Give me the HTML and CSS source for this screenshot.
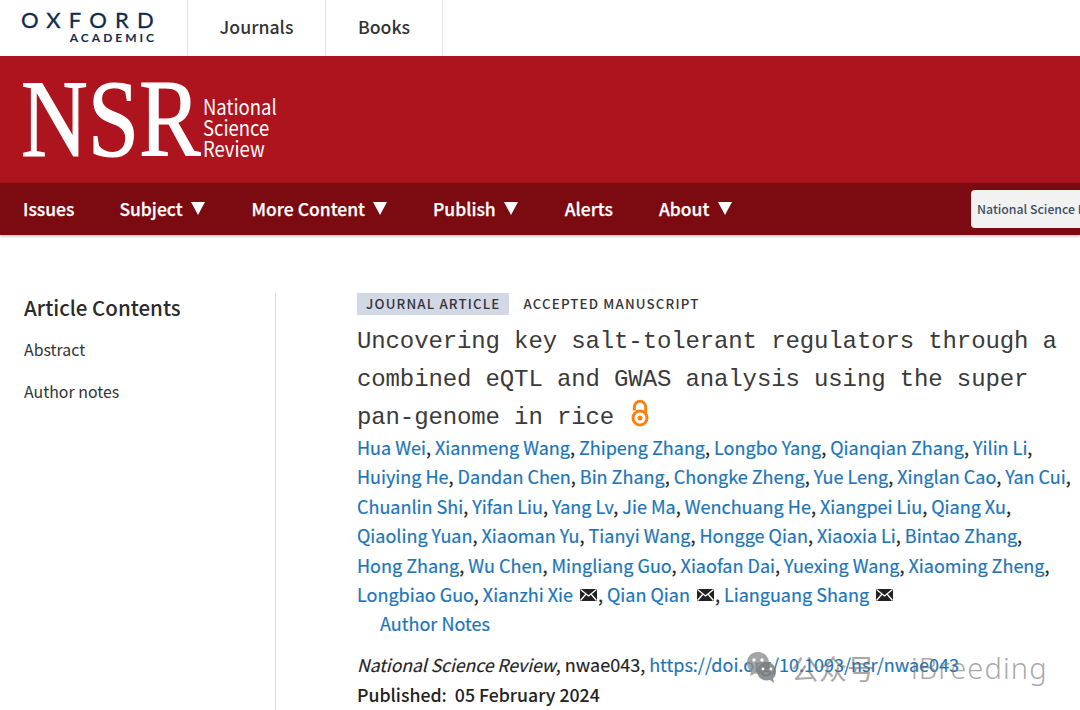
FILE: index.html
```html
<!DOCTYPE html>
<html lang="en">
<head>
<meta charset="utf-8">
<title>Uncovering key salt-tolerant regulators</title>
<link rel="stylesheet" href="styles.css">
</head>
<body>
<header class="topbar">
  <a class="oxford">
    <span class="oxford-main">OXFORD</span>
    <span class="oxford-sub">ACADEMIC</span>
  </a>
  <a class="top-link top-journals">Journals</a>
  <a class="top-link top-books">Books</a>
</header>
<section class="brand">
  <span class="nsr">NSR</span>
  <span class="nsr-name">National<br>Science<br>Review</span>
</section>
<nav class="nav">
  <a class="nav-item nav-issues">Issues</a>
  <a class="nav-item nav-subject">Subject <i class="tri"></i></a>
  <a class="nav-item nav-more">More Content <i class="tri"></i></a>
  <a class="nav-item nav-publish">Publish <i class="tri"></i></a>
  <a class="nav-item nav-alerts">Alerts</a>
  <a class="nav-item nav-about">About <i class="tri"></i></a>
  <div class="search">National Science Review</div>
</nav>
<main class="page">
  <aside class="sidebar">
    <h2 class="side-title">Article Contents</h2>
    <a class="side-link">Abstract</a>
    <a class="side-link">Author notes</a>
  </aside>
  <article class="article">
    <div class="labels">
      <span class="label-type">JOURNAL ARTICLE</span>
      <span class="label-plain">ACCEPTED MANUSCRIPT</span>
    </div>
    <h1 class="title">Uncovering key salt-tolerant regulators through a combined eQTL and GWAS analysis using the super pan-genome in rice
      <svg class="oa" viewBox="0 0 18 28" width="18" height="28"><path d="M3.300 11.500V8a5.700 5.700 0 0 1 11.400 0v6" fill="none" stroke="#f68212" stroke-width="3"/><circle cx="9" cy="19" r="7" fill="none" stroke="#f68212" stroke-width="3"/><circle cx="9" cy="19" r="2.500" fill="#f68212"/></svg></h1>
    <p class="authors">
      <a>Hua Wei</a>, <a>Xianmeng Wang</a>, <a>Zhipeng Zhang</a>, <a>Longbo Yang</a>, <a>Qianqian Zhang</a>, <a>Yilin Li</a>,<br>
      <a>Huiying He</a>, <a>Dandan Chen</a>, <a>Bin Zhang</a>, <a>Chongke Zheng</a>, <a>Yue Leng</a>, <a>Xinglan Cao</a>, <a>Yan Cui</a>,<br>
      <a>Chuanlin Shi</a>, <a>Yifan Liu</a>, <a>Yang Lv</a>, <a>Jie Ma</a>, <a>Wenchuang He</a>, <a>Xiangpei Liu</a>, <a>Qiang Xu</a>,<br>
      <a>Qiaoling Yuan</a>, <a>Xiaoman Yu</a>, <a>Tianyi Wang</a>, <a>Hongge Qian</a>, <a>Xiaoxia Li</a>, <a>Bintao Zhang</a>,<br>
      <a>Hong Zhang</a>, <a>Wu Chen</a>, <a>Mingliang Guo</a>, <a>Xiaofan Dai</a>, <a>Yuexing Wang</a>, <a>Xiaoming Zheng</a>,<br>
      <a>Longbiao Guo</a>, <a>Xianzhi Xie</a> <svg class="mail" viewBox="0 0 17 12" width="17" height="12"><path d="M0 0h17v12H0z" fill="#222"/><path d="M0.500 0.500l8 6.500 8-6.500M0.500 11.500l5.500-6.500M16.500 11.500L11 5" fill="none" stroke="#fff" stroke-width="1.300"/></svg>, <a>Qian Qian</a> <svg class="mail" viewBox="0 0 17 12" width="17" height="12"><path d="M0 0h17v12H0z" fill="#222"/><path d="M0.500 0.500l8 6.500 8-6.500M0.500 11.500l5.500-6.500M16.500 11.500L11 5" fill="none" stroke="#fff" stroke-width="1.300"/></svg>, <a>Lianguang Shang</a> <svg class="mail" viewBox="0 0 17 12" width="17" height="12"><path d="M0 0h17v12H0z" fill="#222"/><path d="M0.500 0.500l8 6.500 8-6.500M0.500 11.500l5.500-6.500M16.500 11.500L11 5" fill="none" stroke="#fff" stroke-width="1.300"/></svg>
    </p>
    <a class="author-notes">Author Notes</a>
    <p class="citation"><em class="journal">National Science Review</em>, nwae043, <a>https://doi.org/10.1093/nsr/nwae043</a></p>
    <p class="published"><span class="pub-label">Published:</span> 05 February 2024</p>
  </article>
</main>
<div class="watermark">
  <svg class="wm-icon" viewBox="0 0 32 34" width="32" height="34"><path d="M12 1C5.500 1 1 5.500 1 12c0 3.500 1.500 6.500 4 8.500L4 25l5-2.500c1 .3 2 .4 3 .4C18.500 23 23 18 23 12S18.500 1 12 1z" fill="#8e8e8e" fill-opacity=".8"/><path d="M21 11c-6 0-10 4-10 9s4 9.500 10 9.500c1 0 2-.1 3-.4l4 3-1-4.500c2-1.700 3-4.500 3-7.100 0-5-4-9.500-9-9.500z" fill="#7e7e7e" fill-opacity=".85"/><circle cx="8" cy="9" r="1.700" fill="#fff"/><circle cx="16" cy="9" r="1.700" fill="#fff"/><circle cx="17" cy="18" r="1.400" fill="#fff"/><circle cx="25" cy="18" r="1.400" fill="#fff"/></svg>
  <span class="wm-cjk">公众号</span>
  <span class="wm-latin">iBreeding</span>
</div>
</body>
</html>
```
FILE: styles.css
```css
* { box-sizing: border-box; }
html, body { margin: 0; padding: 0; }
body {
  width: 1080px; height: 710px; overflow: hidden; position: relative; background: #fff;
  font-family: "Noto Sans CJK SC", "Noto Sans", sans-serif; color: #2a2a2a;
}
a { color: inherit; text-decoration: none; }

.topbar { display: flex; height: 56px; align-items: stretch; background: #fff; }
.oxford {
  width: 188px; padding: 8px 33px 0 20px; border-right: 1px solid #dfe3ec;
  display: flex; flex-direction: column; align-items: flex-end; color: #0e2b4e;
}
.oxford-main { font-family: Lato, sans-serif; font-size: 22px; line-height: 23px; letter-spacing: 8.200px; margin-right: -8px; white-space: nowrap; -webkit-text-stroke: .3px #0e2b4e; }
.oxford-sub { font-family: Lato, sans-serif; font-size: 12px; line-height: 13px; letter-spacing: 3px; font-weight: 700; margin-right: -3px; white-space: nowrap; }
.top-link { display: flex; align-items: center; justify-content: center; padding-bottom: 4px; font-size: 17.700px; font-weight: 500; border-right: 1px solid #dfe3ec; color: #333; }
.top-journals { width: 138px; }
.top-books { width: 117px; }

.brand { height: 127px; background: #ad141e; color: #fff; display: flex; padding-left: 21px; }
.nsr {
  font-family: "Liberation Serif", serif; font-size: 110px; line-height: 127px; width: 182px;
  transform: scaleX(.84); transform-origin: left center; display: block; white-space: nowrap;
  -webkit-text-stroke: 1.200px #fff;
}
.nsr-name {
  font-size: 21px; line-height: 21px; margin-top: 40px; height: 63px; font-weight: 400;
  transform: scaleX(.88); transform-origin: left top; white-space: nowrap;
}

.nav {
  height: 52px; padding-bottom: 2px; background: #7c0a11; color: #fff; display: flex; align-items: center;
  box-shadow: 0 1px 3px rgba(0,0,0,.3); position: relative; font-size: 17.500px; font-weight: 500;
  -webkit-text-stroke: .25px #fff;
}
.nav-item { white-space: nowrap; display: block; }
.nav-issues { margin-left: 23px; }
.nav-subject { margin-left: 45px; }
.nav-more { margin-left: 46.500px; }
.nav-publish { margin-left: 45.500px; }
.nav-alerts { margin-left: 46.500px; }
.nav-about { margin-left: 46px; }
.tri {
  display: inline-block; width: 0; height: 0; margin-left: 4.500px; vertical-align: 1px;
  border-left: 7.500px solid transparent; border-right: 7.500px solid transparent; border-top: 13px solid #fff;
}
.search {
  position: absolute; left: 971px; top: 7px; width: 130px; height: 38px; background: #f2f2f2; border-radius: 4px;
  font-size: 12.300px; color: #3d4f66; line-height: 38px; padding-left: 6px; white-space: nowrap; overflow: hidden; font-weight: 500;
  -webkit-text-stroke: 0;
}

.page { display: flex; margin-top: 58px; }
.sidebar { width: 276px; height: 417px; border-right: 1px solid #d9d9d9; padding-left: 24px; }
.side-title { margin: -1px 0 16px; font-size: 20.500px; line-height: 30px; font-weight: 500; color: #2a2a2a; }
.side-link { display: block; font-size: 15.900px; line-height: 23px; margin-bottom: 19px; color: #333; }

.article { margin-left: 81px; width: 723px; }
.labels { display: flex; align-items: center; height: 22px; font-size: 13.300px; letter-spacing: 1.150px; font-weight: 500; color: #333; }
.label-type { background: #d3d8e6; padding: 0 9px; line-height: 21px; height: 22px; margin-right: 14px; }
.label-plain { margin-top: -1px; }
.title {
  margin: 8px 0 0; font-family: "Liberation Mono", monospace; font-weight: 400; font-size: 24px; line-height: 38px;
  color: #3a3a3a; letter-spacing: -.12px; width: 710px;
}
.oa { vertical-align: -3px; margin-left: 3px; }
.authors { margin: -4px 0 0; font-size: 18px; line-height: 29.400px; color: #222; white-space: nowrap; -webkit-text-stroke: .2px; }
.authors a, .author-notes, .citation a { color: #1c75b8; }
.mail { vertical-align: 1px; margin: 0 1px 0 3px; }
.author-notes { display: block; margin-left: 23px; font-size: 18px; line-height: 29.400px; -webkit-text-stroke: .2px; }
.citation { margin: 11px 0 0; font-size: 18px; line-height: 29px; color: #222; white-space: nowrap; -webkit-text-stroke: .15px; }
.journal { font-size: 17.500px; }
.published { margin: 1px 0 0; font-size: 17.700px; line-height: 29px; font-weight: 500; color: #222; white-space: nowrap; }
.pub-label { margin-right: 4px; }

.watermark {
  position: absolute; left: 746px; top: 650px; display: flex; align-items: center;
  pointer-events: none;
}
.wm-cjk { margin-left: 13px; font-size: 28px; line-height: 36px; color: rgba(110,110,110,.6); white-space: nowrap; }
.wm-latin { margin-left: 36px; font-family: "Noto Sans", sans-serif; font-size: 29px; line-height: 36px; color: rgba(110,110,110,.6); letter-spacing: 1.100px; white-space: nowrap; font-weight: 300; }
```
